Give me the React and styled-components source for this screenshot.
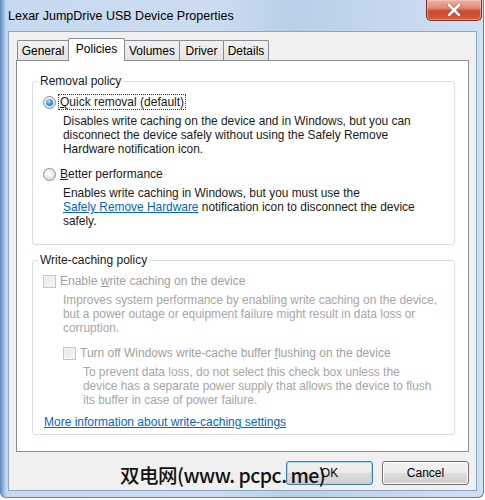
import React from 'react';
import styled, { createGlobalStyle } from 'styled-components';

const Page = createGlobalStyle`
  html, body {
    margin: 0;
    background: #ffffff;
  }
  body {
    font-family: "Liberation Sans", Arial, sans-serif;
    font-size: 12px;
    color: #1a1a1a;
  }
`;

const tabs = [
  { label: 'General', width: 52 },
  { label: 'Policies', width: 57, active: true },
  { label: 'Volumes', width: 56 },
  { label: 'Driver', width: 45 },
  { label: 'Details', width: 46 },
];

const App = () => {
  return (
    <>
      <Page />
      <Window>
        <TitleBar>
          <Title>Lexar JumpDrive USB Device Properties</Title>
          <CloseButton>
            <svg width="14" height="12" viewBox="0 0 14 12">
              <path d="M2 1 L12 11 M12 1 L2 11" stroke="#6b2a20" strokeWidth="4" strokeLinecap="round" opacity="0.45" />
              <path d="M2 1 L12 11 M12 1 L2 11" stroke="#ffffff" strokeWidth="2.6" strokeLinecap="round" />
            </svg>
          </CloseButton>
        </TitleBar>

        <Client>
          <TabStrip>
            {tabs.map((t) => (
              <Tab key={t.label} $active={t.active} $width={t.width}>
                {t.label}
              </Tab>
            ))}
          </TabStrip>

          <Panel>
            <GroupBox>
              <Legend>Removal policy</Legend>
              <Row>
                <Radio $checked />
                <FocusLabel><u>Q</u>uick removal (default)</FocusLabel>
              </Row>
              <Description $indent={20}>
                Disables write caching on the device and in Windows, but you can<br />
                disconnect the device safely without using the Safely Remove<br />
                Hardware notification icon.
              </Description>
              <Row $gap={10}>
                <Radio />
                <Label><u>B</u>etter performance</Label>
              </Row>
              <Description $indent={20}>
                Enables write caching in Windows, but you must use the<br />
                <Link>Safely Remove Hardware</Link> notification icon to disconnect the device<br />
                safely.
              </Description>
            </GroupBox>

            <GroupBox $spaced $bottom={5}>
              <Legend>Write-caching policy</Legend>
              <Row>
                <CheckBox />
                <Label $disabled>Enable <u>w</u>rite caching on the device</Label>
              </Row>
              <Description $indent={20} $disabled>
                Improves system performance by enabling write caching on the device,<br />
                but a power outage or equipment failure might result in data loss or<br />
                corruption.
              </Description>
              <Row $gap={10} $indent={20}>
                <CheckBox />
                <Label $disabled>Turn off Windows write-cache buffer <u>f</u>lushing on the device</Label>
              </Row>
              <Description $indent={40} $disabled>
                To prevent data loss, do not select this check box unless the<br />
                device has a separate power supply that allows the device to flush<br />
                its buffer in case of power failure.
              </Description>
              <MoreInfo>
                <Link>More information about write-caching settings</Link>
              </MoreInfo>
            </GroupBox>
          </Panel>

          <ButtonRow>
            <Button $default>OK</Button>
            <Button>Cancel</Button>
          </ButtonRow>
        </Client>

        <Watermark>双电网(www. pcpc. me)</Watermark>
      </Window>
    </>
  );
};

export default App;

const Window = styled.div`
  position: relative;
  box-sizing: border-box;
  width: 484px;
  height: 498px;
  display: flex;
  flex-direction: column;
  border-right: 1px solid #5f82ad;
  border-bottom: 1px solid #5f82ad;
  border-radius: 0 0 6px 6px;
  background:
    linear-gradient(to right, #5d86bb 0px, #8fb0d8 3px, #c3d7ee 6px, rgba(201, 220, 240, 0) 9px),
    linear-gradient(to right, #c6d9ef 0%, #cbdcf0 45%, #b9cfe8 60%, #c4d7ed 80%, #cfe0f2 100%);
`;

const TitleBar = styled.div`
  height: 31px;
  display: flex;
  align-items: flex-start;
  padding-left: 8px;
`;

const Title = styled.div`
  margin-top: 10px;
  font-size: 12.5px;
  line-height: 13px;
  color: #000;
`;

const CloseButton = styled.div`
  margin-left: auto;
  margin-right: 1px;
  width: 56px;
  height: 21px;
  box-sizing: border-box;
  display: flex;
  align-items: center;
  justify-content: center;
  border: 1px solid #7a2e22;
  border-top: none;
  border-radius: 0 0 5px 5px;
  background: linear-gradient(#eeb2a3 0%, #e08a73 40%, #cc4a31 55%, #d15a3f 100%);
  box-shadow: inset 0 0 0 1px rgba(255, 210, 200, 0.5);
`;

const Client = styled.div`
  flex: 1;
  margin: 0 6px 6px 8px;
  padding: 6px 7px 0 7px;
  background: #f0f0f0;
  border: 1px solid #8da6c3;
  display: flex;
  flex-direction: column;
`;

const TabStrip = styled.div`
  position: relative;
  z-index: 1;
  height: 22px;
  display: flex;
  align-items: flex-end;
  padding-left: 1px;
`;

const Tab = styled.div`
  box-sizing: border-box;
  width: ${(p) => p.$width}px;
  height: ${(p) => (p.$active ? 23 : 20)}px;
  margin-bottom: ${(p) => (p.$active ? -1 : 0)}px;
  margin-left: -1px;
  &:first-child {
    margin-left: 0;
  }
  display: flex;
  align-items: center;
  justify-content: center;
  padding-bottom: ${(p) => (p.$active ? 3 : 0)}px;
  border: 1px solid #898c95;
  border-bottom: none;
  border-radius: 2px 2px 0 0;
  background: ${(p) => (p.$active ? '#ffffff' : 'linear-gradient(#f2f2f2, #e3e3e3)')};
  position: relative;
  z-index: ${(p) => (p.$active ? 2 : 1)};
  font-size: 12px;
  color: #000;
`;

const Panel = styled.div`
  box-sizing: border-box;
  height: 392px;
  background: #ffffff;
  border: 1px solid #898c95;
  padding: 13px 13px 0 15px;
`;

const GroupBox = styled.fieldset`
  margin: ${(p) => (p.$spaced ? 8 : 0)}px 0 0 0;
  min-width: 0;
  padding: 6px 10px ${(p) => (p.$bottom ?? 16)}px 10px;
  border: 1px solid #d5dfe5;
  border-radius: 3px;
`;

const Legend = styled.legend`
  margin-left: -5px;
  padding: 0 2px;
  font-size: 12px;
  line-height: 14px;
  color: #1a1a1a;
`;

const Row = styled.div`
  display: flex;
  align-items: center;
  height: 16px;
  gap: 4px;
  margin-top: ${(p) => p.$gap ?? 0}px;
  margin-left: ${(p) => p.$indent ?? 0}px;
`;

const Radio = styled.span`
  box-sizing: border-box;
  width: 13px;
  height: 13px;
  border-radius: 50%;
  border: 1px solid #8a8f96;
  background: radial-gradient(circle at 45% 40%, #ffffff 0%, #eaeaea 45%, #c9cccf 100%);
  display: flex;
  align-items: center;
  justify-content: center;

  &::after {
    content: '';
    display: ${(p) => (p.$checked ? 'block' : 'none')};
    width: 7px;
    height: 7px;
    border-radius: 50%;
    background: radial-gradient(circle at 40% 35%, #c8eafc 0%, #46a2e0 40%, #134e8f 100%);
  }
`;

const CheckBox = styled.span`
  box-sizing: border-box;
  width: 13px;
  height: 13px;
  border: 1px solid #c4c6c9;
  background: linear-gradient(135deg, #e6e6e6 0%, #f6f6f6 100%);
  box-shadow: inset 0 0 0 1px #f4f4f4;
`;

const Label = styled.span`
  font-size: 12px;
  line-height: 14px;
  color: ${(p) => (p.$disabled ? '#a0a0a0' : '#1a1a1a')};
`;

const FocusLabel = styled(Label)`
  margin-left: -2px;
  padding: 0 1px;
  border: 1px dotted #333;
`;

const Description = styled.div`
  margin: 4px 0 0 ${(p) => p.$indent}px;
  font-size: 11.9px;
  line-height: 14px;
  color: ${(p) => (p.$disabled ? '#a6a6a6' : '#1a1a1a')};
`;

const Link = styled.span`
  color: #0066cc;
  text-decoration: underline;
`;

const MoreInfo = styled.div`
  margin: 8px 0 0 1px;
  font-size: 12px;
  line-height: 14px;
`;

const ButtonRow = styled.div`
  display: flex;
  justify-content: flex-end;
  gap: 9px;
  padding-top: 9px;
`;

const Button = styled.div`
  box-sizing: border-box;
  width: 87px;
  height: 24px;
  display: flex;
  align-items: center;
  justify-content: center;
  font-size: 12px;
  color: #000;
  border: 1px solid ${(p) => (p.$default ? '#3c7fb1' : '#707070')};
  border-radius: 3px;
  background: linear-gradient(#f2f2f2 0%, #ebebeb 50%, #dddddd 51%, #cfcfcf 100%);
  box-shadow: ${(p) => (p.$default ? 'inset 0 0 0 1px #9fd6f5' : 'inset 0 0 0 1px #fcfcfc')};
`;

const Watermark = styled.div`
  position: absolute;
  left: 120px;
  top: 462px;
  font-family: "Noto Sans CJK SC", "Liberation Sans", sans-serif;
  font-size: 19.5px;
  font-weight: 500;
  letter-spacing: -0.5px;
  line-height: 26px;
  color: #111;
  white-space: nowrap;
`;
